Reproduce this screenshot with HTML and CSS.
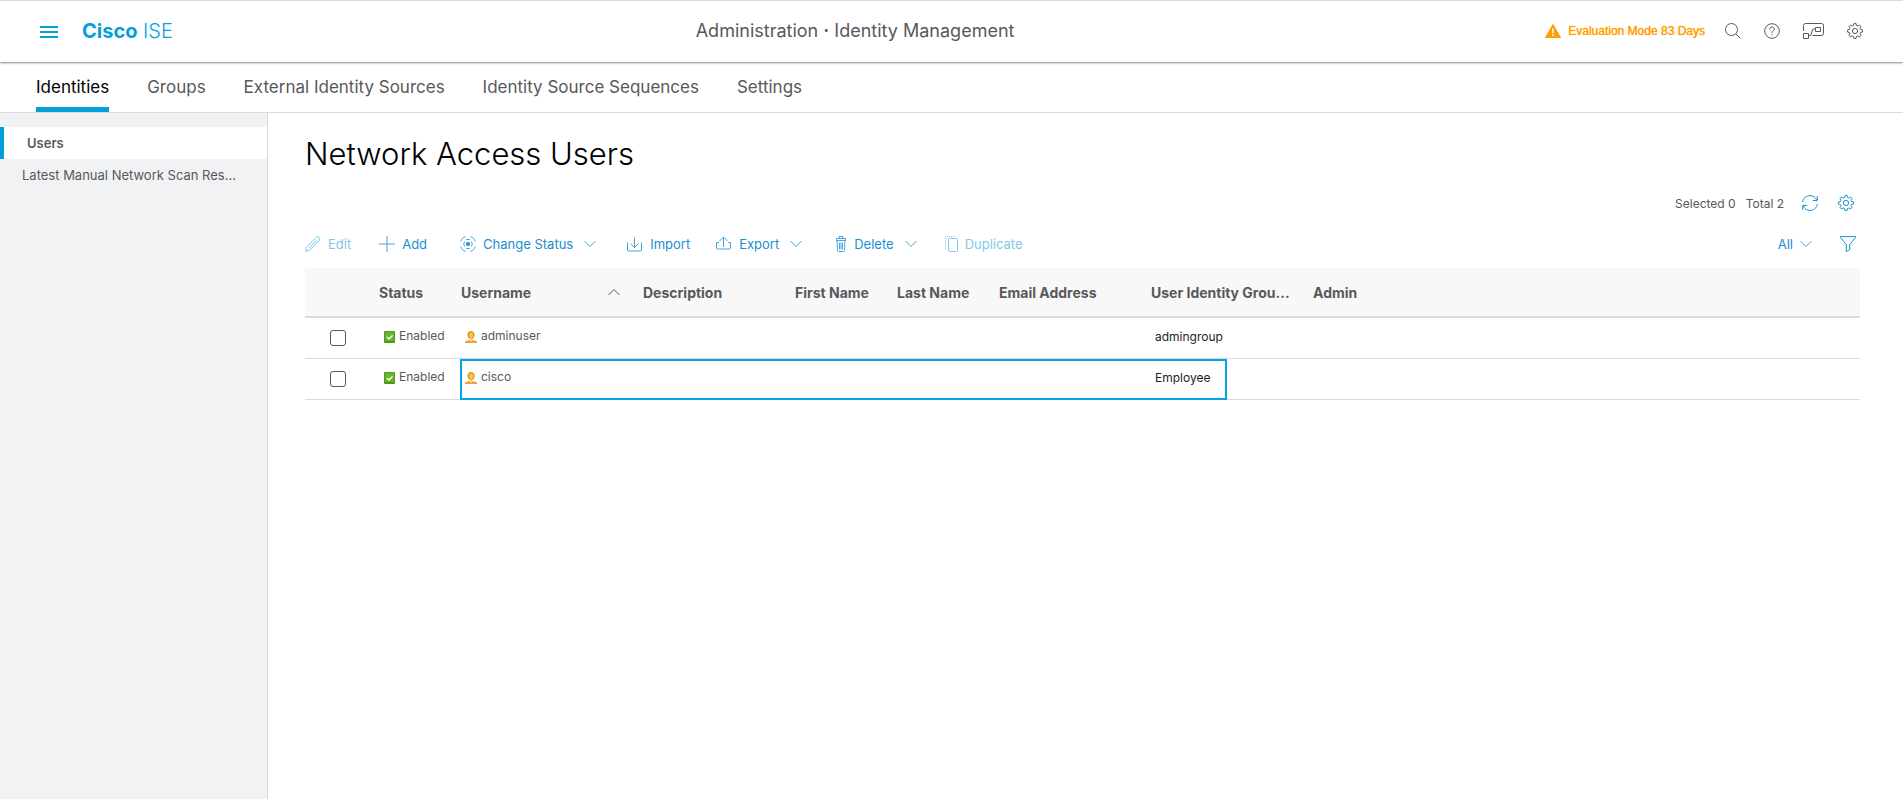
FILE: index.html
```html
<!DOCTYPE html>
<html lang="en">
<head>
<meta charset="utf-8">
<title>Cisco ISE - Network Access Users</title>
<link rel="stylesheet" href="styles.css">
</head>
<body>
<svg class="defs" aria-hidden="true">
  <symbol id="gear" viewBox="0 0 16 16"><path d="M6.9 .6h2.2l.4 1.9 1.3.6 1.7-1.1 1.5 1.5-1.1 1.7.6 1.3 1.9.4v2.2l-1.9.4-.6 1.3 1.1 1.7-1.5 1.5-1.7-1.1-1.3.6-.4 1.9H6.9l-.4-1.9-1.3-.6L3.500 14 2 12.500l1.100-1.700-.6-1.300L.6 9.100V6.900l1.900-.4.6-1.300L2 3.500 3.500 2l1.700 1.100 1.300-.6z"/><circle cx="8" cy="8" r="2.600"/></symbol>
  <symbol id="chevron" viewBox="0 0 12 8"><path d="M.5 1 6 6.500 11.500 1"/></symbol>
  <symbol id="enabled" viewBox="0 0 11 12"><rect width="11" height="12" rx="1" fill="#4a9a1c"/><rect x="1" y="1" width="9" height="9" fill="#68b42e"/><path d="M3 6l2 2 3.500-3.500" fill="none" stroke="#fff" stroke-width="1.400"/></symbol>
  <symbol id="person" viewBox="0 0 12 12"><path d="M0 12v-1c0-1.300 2.500-1.200 4.500-2h3c2 .8 4.500.7 4.500 2v1z" fill="#eba23a"/><path d="M2.500 4C2.500 1.500 4 0 6 0s3.500 1.500 3.500 4c0 2-1 3.200-2 4H5c-1.500-.8-2.500-2-2.500-4z" fill="#dd9418"/><ellipse cx="6.200" cy="4.200" rx="1.900" ry="3" fill="#ffc34a"/><path d="M5 7.500h2V10l-1 1-1-1z" fill="#ffd07a"/></symbol>
</svg>

<header class="topbar">
  <button class="icon-button menu" aria-label="Menu"><svg width="18" height="12" viewBox="0 0 18 12"><path d="M0 1h18M0 6h18M0 11h18" stroke-width="2"/></svg></button>
  <a class="brand" href="#"><b>Cisco</b> ISE</a>
  <div class="context">Administration <b>·</b> Identity Management</div>
  <div class="evaluation">
    <svg width="16" height="14" viewBox="0 0 16 14"><path d="M8 .5 15.500 13.500H.5z" fill="#ff9c00" stroke="#ff9c00" stroke-linejoin="round"/><path d="M8 4.500v4.500M8 10.300v1.700" stroke="#fff" stroke-width="1.600"/></svg>
    Evaluation Mode 83 Days
  </div>
  <div class="tools">
    <button class="icon-button" aria-label="Search"><svg width="16" height="16" viewBox="0 0 16 16"><circle cx="6.500" cy="6.500" r="6"/><path d="M10.800 10.800 15.500 15.500"/></svg></button>
    <button class="icon-button" aria-label="Help"><svg width="16" height="16" viewBox="0 0 16 16"><circle cx="8" cy="8" r="7.300"/><path d="M5.700 6.400c0-3.200 4.600-3.200 4.600-.3C10.300 8 8 7.900 8 9.900M8 11.200v1.200"/></svg></button>
    <button class="icon-button" aria-label="Interactive help"><svg width="21" height="16" viewBox="0 0 21 16"><path d="M.5 8V2.500q0-2 2-2h16q2 0 2 2v8q0 2-2 2h-9M.5 10.500h5v5h-5zM12.500 4.500h5v4h-5zM6 12.500h1.500l2.500-6.500h2"/></svg></button>
    <button class="icon-button" aria-label="Settings"><svg width="16" height="16"><use href="#gear"/></svg></button>
  </div>
</header>

<nav class="tabs">
  <a class="tab active" href="#">Identities</a>
  <a class="tab" href="#">Groups</a>
  <a class="tab" href="#">External Identity Sources</a>
  <a class="tab" href="#">Identity Source Sequences</a>
  <a class="tab" href="#">Settings</a>
</nav>

<div class="page">
  <aside class="sidebar">
    <a class="side-link active" href="#">Users</a>
    <a class="side-link" href="#">Latest Manual Network Scan Res...</a>
  </aside>
  <main class="content">
    <h1>Network Access Users</h1>
    <div class="summary">
      <span>Selected 0</span>
      <span>Total 2</span>
      <button class="icon-button refresh" aria-label="Refresh"><svg width="16" height="16" viewBox="0 0 16 16"><path d="M.7 7C1 3 4.500.6 8 .6c3 0 5.500 1.600 6.700 4.400M15.300 1v4.500h-4.500M15.300 9c-.3 4-3.800 6.400-7.300 6.400-3 0-5.500-1.600-6.700-4.400M.7 15v-4.500h4.500"/></svg></button>
      <button class="icon-button table-settings" aria-label="Table settings"><svg width="16" height="16"><use href="#gear"/></svg></button>
    </div>
    <div class="toolbar">
      <button class="action edit" disabled><svg width="16" height="16" viewBox="0 0 16 16"><path d="M.6 15.400 1.600 11 11.500 1.200q1.500-1.200 2.700 0t.2 2.800L4.800 14.200z M4 12l7.500-7.500"/></svg>Edit</button>
      <button class="action add"><svg width="16" height="16" viewBox="0 0 16 16"><path d="M8 0v16M0 8h16"/></svg>Add</button>
      <button class="action change"><svg width="16" height="16" viewBox="0 0 16 16"><circle cx="8" cy="8" r="1.800" fill="#049fd9"/><path d="M4.500 5.500Q3 8 4.500 10.500M11.500 5.500Q13 8 11.500 10.500M6 3.800Q8 3 10 3.800M6 12.200Q8 13 10 12.200M.6 5.500C1.300 3.200 3.200 1.300 5.500.6M10.500.6c2.300.7 4.200 2.600 4.900 4.900M15.400 10.500c-.7 2.300-2.600 4.200-4.900 4.900M5.500 15.400C3.200 14.700 1.300 12.800.6 10.500"/></svg>Change Status<svg class="chevron" width="12" height="8"><use href="#chevron"/></svg></button>
      <button class="action import"><svg width="16" height="16" viewBox="0 0 16 16"><path d="M.5 6.500V14q0 1 1 1h12q1 0 1-1V6.500M7.500 1.500v10M3.500 7.500l4 4 4-4"/></svg>Import</button>
      <button class="action export"><svg width="16" height="16" viewBox="0 0 16 16"><path d="M3 6.500H.5V12q0 1 1 1h12q1 0 1-1V6.500H12M7.500 11V1M3.500 5l4-4 4 4"/></svg>Export<svg class="chevron" width="12" height="8"><use href="#chevron"/></svg></button>
      <button class="action delete"><svg width="12" height="16" viewBox="0 0 12 16"><path d="M1 4.500h10M1.500 2.500h9v2h-9zM4 2.500v-2h4v2M2 4.500l.5 10q0 1 1 1h5q1 0 1-1l.5-10M4.500 6.500v7M6 6.500v7M7.500 6.500v7"/></svg>Delete<svg class="chevron" width="12" height="8"><use href="#chevron"/></svg></button>
      <button class="action duplicate" disabled><svg width="13" height="16" viewBox="0 0 13 16"><rect x="3.500" y="2.500" width="9" height="13" rx="1"/><path d="M.5 13V.5H10" stroke-dasharray="1 1"/></svg>Duplicate</button>
      <button class="action view">All<svg class="chevron" width="12" height="8"><use href="#chevron"/></svg></button>
      <button class="icon-button filter" aria-label="Filter"><svg width="16" height="16" viewBox="0 0 16 16"><path d="M.5.6h15v1L9.700 8.500v5.200l-3.400 1.800v-7L.5 1.600z"/></svg></button>
    </div>
    <table>
      <colgroup><col class="c-check"><col class="c-status"><col class="c-user"><col class="c-desc"><col class="c-name"><col class="c-name"><col class="c-desc"><col class="c-group"><col></colgroup>
      <thead>
        <tr><th></th><th>Status</th><th><span class="sorted">Username<svg class="sort" width="12" height="8" viewBox="0 0 12 8"><path d="M.5 7 6 1.500 11.500 7"/></svg></span></th><th>Description</th><th>First Name</th><th>Last Name</th><th>Email Address</th><th>User Identity Grou...</th><th>Admin</th></tr>
      </thead>
      <tbody>
        <tr><td class="check"><input type="checkbox" aria-label="Select adminuser"></td><td><span class="label status"><svg width="11" height="12"><use href="#enabled"/></svg>Enabled</span></td><td><span class="label"><svg width="12" height="12"><use href="#person"/></svg>adminuser</span></td><td></td><td></td><td></td><td></td><td class="group">admingroup</td><td></td></tr>
        <tr><td class="check"><input type="checkbox" aria-label="Select cisco"></td><td><span class="label status"><svg width="11" height="12"><use href="#enabled"/></svg>Enabled</span></td><td class="marked"><span class="label"><svg width="12" height="12"><use href="#person"/></svg>cisco</span></td><td></td><td></td><td></td><td></td><td class="group">Employee</td><td></td></tr>
      </tbody>
    </table>
  </main>
</div>
</body>
</html>
```
FILE: styles.css
```css
*, *::after { box-sizing: border-box; }
body {
  margin: 0;
  min-height: 100vh;
  display: flex;
  flex-direction: column;
  background: #fff;
  color: #58585b;
  font-family: Inter, "Liberation Sans", sans-serif;
  font-size: 12px;
}
.defs { position: absolute; width: 0; height: 0; }
svg { flex: none; fill: none; stroke: currentColor; stroke-width: 1; }
a { color: inherit; text-decoration: none; }
button { margin: 0; padding: 0; border: 0; background: none; color: inherit; font: inherit; }
.icon-button { display: flex; }

.topbar {
  position: relative;
  display: flex;
  align-items: center;
  height: 62px;
  padding: 0 40px 2px;
  border-top: 1px solid #dbdbdb;
  box-shadow: 0 1px 2px #888;
}
.menu { padding-top: 2px; color: #049fd9; }
.brand { margin-left: 24px; color: #049fd9; font-size: 20px; font-weight: 300; }
.brand b { font-weight: 700; }
.context { flex: 1; padding-right: 8px; text-align: center; font-size: 18px; }
.evaluation {
  display: flex;
  align-items: center;
  gap: 7px;
  color: #ff9c00;
  font-family: "Liberation Sans", Arial, sans-serif;
  text-shadow: 0 0 1px #ff9c00;
}
.tools { display: flex; gap: 23px; margin-left: 20px; }

.tabs {
  display: flex;
  gap: 38px;
  height: 51px;
  padding: 0 36px;
  border-bottom: 1px solid #dbdbdb;
  font-size: 17px;
}
.tab { padding-top: 15px; line-height: 20px; border-bottom: 5px solid transparent; }
.tab.active { color: #000; border-color: #049fd9; }

.page { display: flex; flex: 1; }
.sidebar {
  flex: none;
  width: 268px;
  padding-top: 14px;
  background: #f1f2f4;
  border-right: 1px solid #dbdbdb;
}
.side-link { display: block; padding: 0 22px; font-size: 13px; line-height: 32px; white-space: nowrap; }
.side-link.active { padding-left: 23px; border-left: 4px solid #049fd9; background: #fff; font-weight: 600; }

.content { flex: 1; min-width: 0; padding: 21px 43px 0 37px; }
h1 { margin: 0; color: #000; font-size: 31px; font-weight: 300; line-height: 40px; }
.summary { display: flex; align-items: center; justify-content: flex-end; gap: 10px; margin-top: 19px; padding-right: 6px; height: 20px; }
.refresh, .table-settings, .action, .filter { color: #1a90cf; }
.refresh { margin-left: 8px; }
.table-settings { margin-left: 10px; }

.toolbar { display: flex; align-items: center; height: 49px; margin-top: 6px; }
.action { display: flex; align-items: center; gap: 7px; margin-right: 28px; font-size: 13px; }
.action svg { stroke: #4aa3da; }
.action:disabled, .action:disabled svg { color: #80c9e8; stroke: #80c9e8; }
.chevron { margin-left: 4px; }
.add, .export { margin-right: 33px; }
.change { margin-right: 31px; }
.import { margin-right: 26px; }
.view { margin: 0 28px 0 auto; }
.view .chevron { margin-left: 0; }
.filter { margin-right: 4px; }

table { width: 100%; table-layout: fixed; border-collapse: collapse; }
.c-check { width: 74px; }
.c-status { width: 82px; }
.c-user { width: 182px; }
.c-desc { width: 152px; }
.c-name { width: 102px; }
.c-group { width: 162px; }
th, td { padding: 0; text-align: left; white-space: nowrap; }
th { height: 49px; background: #f8f8f8; border-bottom: 2px solid #dbdbdb; font-size: 14px; font-weight: 700; }
td { height: 41px; border-bottom: 1px solid #dbdbdb; }
.sorted { display: flex; align-items: center; justify-content: space-between; padding-right: 23px; }
.check { padding-left: 25px; }
.check input {
  display: block;
  appearance: none;
  width: 16px;
  height: 16px;
  margin: 0;
  border: 1px solid #58585b;
  border-radius: 3px;
}
.label { display: flex; align-items: center; gap: 4px; padding: 0 0 4px 4px; }
.status { padding-left: 5px; }
.label svg { margin-top: 2px; stroke: none; }
.group { padding: 0 0 2px 4px; color: #222; }
.marked { position: relative; }
.marked::after {
  content: "";
  position: absolute;
  top: 0;
  left: -1px;
  width: 767px;
  height: 41px;
  border: 2px solid #04a4e6;
}
```
